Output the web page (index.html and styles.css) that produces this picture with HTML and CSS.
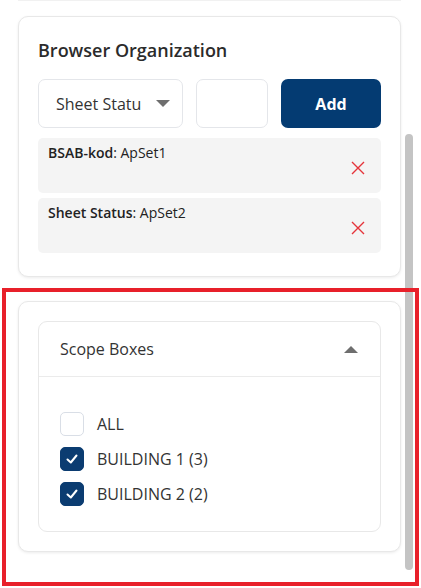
FILE: index.html
```html
<!DOCTYPE html>
<html lang="en">
<head>
    <meta charset="UTF-8">
    <meta name="viewport" content="width=device-width, initial-scale=1.0">
    <title>Browser Organization</title>
    <link rel="stylesheet" href="styles.css">
</head>
<body>

<div class="page">
    <div class="main">
        <div class="prev-card"></div>

        <!-- Browser Organization -->
        <div class="card org-card">
            <div class="title">Browser Organization</div>

            <div class="add-row">
                <div class="select">
                    <span class="select-text">Sheet Statu</span>
                    <span class="caret-down"></span>
                </div>
                <div class="value-input"></div>
                <button class="btn-add">Add</button>
            </div>

            <div class="rule">
                <div class="rule-text"><strong>BSAB-kod</strong>: ApSet1</div>
                <svg class="remove" width="14" height="14" viewBox="0 0 14 14">
                    <path d="M1 1 L13 13 M13 1 L1 13" stroke="#e5343a" stroke-width="1.4" fill="none"/>
                </svg>
            </div>
            <div class="rule">
                <div class="rule-text"><strong>Sheet Status</strong>: ApSet2</div>
                <svg class="remove" width="14" height="14" viewBox="0 0 14 14">
                    <path d="M1 1 L13 13 M13 1 L1 13" stroke="#e5343a" stroke-width="1.4" fill="none"/>
                </svg>
            </div>
        </div>

        <!-- Scope Boxes -->
        <div class="card scope-card">
            <div class="accordion">
                <div class="acc-header">
                    <span>Scope Boxes</span>
                    <span class="caret-up"></span>
                </div>
                <div class="acc-body">
                    <div class="check-row">
                        <span class="checkbox"></span>
                        <span>ALL</span>
                    </div>
                    <div class="check-row">
                        <span class="checkbox checked">
                            <svg width="14" height="14" viewBox="0 0 14 14"><path d="M2.5 7.5 L5.8 10.5 L11.5 3.5" stroke="#fff" stroke-width="2" fill="none" stroke-linecap="round" stroke-linejoin="round"/></svg>
                        </span>
                        <span>BUILDING 1 (3)</span>
                    </div>
                    <div class="check-row">
                        <span class="checkbox checked">
                            <svg width="14" height="14" viewBox="0 0 14 14"><path d="M2.5 7.5 L5.8 10.5 L11.5 3.5" stroke="#fff" stroke-width="2" fill="none" stroke-linecap="round" stroke-linejoin="round"/></svg>
                        </span>
                        <span>BUILDING 2 (2)</span>
                    </div>
                </div>
            </div>
        </div>
    </div>

    <div class="scroll-track">
        <div class="scroll-thumb"></div>
    </div>
</div>

<!-- highlight frame -->
<div class="highlight"></div>

</body>
</html>
```

FILE: styles.css
```css
body {
    margin: 0;
    padding: 0;
    background: #fff;
    color: #333;
    font-family: "Open Sans", Arial, sans-serif;
}
.page {
    display: flex;
    width: 421px;
}
.main {
    width: 383px;
    padding-left: 18px;
}
.prev-card {
    height: 1px;
    background: #f1f1f1;
}
.card {
    background: #fff;
    border: 1px solid #e8e8e8;
    border-radius: 10px;
    box-shadow: 0 1px 3px rgba(0, 0, 0, 0.08);
}
.org-card {
    margin-top: 15px;
    padding: 21px 19px 23px;
}
.title {
    font-size: 18px;
    font-weight: 600;
    line-height: 24px;
    color: #2b2b2b;
    margin-bottom: 17px;
}
.add-row {
    display: flex;
    gap: 13px;
    height: 49px;
    margin-bottom: 10px;
}
.select {
    width: 145px;
    box-sizing: border-box;
    border: 1px solid #e4e6ea;
    border-radius: 7px;
    display: flex;
    align-items: center;
    padding-left: 17px;
}
.select-text {
    width: 88px;
    white-space: nowrap;
    font-size: 16px;
    color: #333;
}
.caret-down {
    margin-left: 12px;
    width: 0;
    height: 0;
    border-left: 7px solid transparent;
    border-right: 7px solid transparent;
    border-top: 7px solid #6e6e6e;
}
.value-input {
    width: 72px;
    box-sizing: border-box;
    border: 1px solid #e4e6ea;
    border-radius: 7px;
}
.btn-add {
    width: 100px;
    border: none;
    border-radius: 7px;
    background: #043b72;
    color: #fff;
    font-family: "Open Sans", Arial, sans-serif;
    font-size: 16px;
    font-weight: 700;
    cursor: pointer;
}
.rule {
    display: flex;
    justify-content: space-between;
    height: 55px;
    box-sizing: border-box;
    padding: 5px 16px 0 10px;
    background: #f4f4f4;
    border-radius: 5px;
    margin-bottom: 5px;
}
.rule:last-child {
    margin-bottom: 0;
}
.rule-text {
    font-size: 14px;
    line-height: 20px;
    color: #222;
}
.rule-text strong {
    font-weight: 600;
}
.remove {
    margin-top: 18px;
}
.scope-card {
    margin-top: 24px;
    padding: 19px;
}
.accordion {
    border: 1px solid #e8e8e8;
    border-radius: 9px;
}
.acc-header {
    height: 54px;
    display: flex;
    align-items: center;
    justify-content: space-between;
    padding: 0 22px 0 21px;
    border-bottom: 1px solid #ebebeb;
    font-size: 16px;
    color: #333;
}
.caret-up {
    width: 0;
    height: 0;
    border-left: 7px solid transparent;
    border-right: 7px solid transparent;
    border-bottom: 7px solid #6e6e6e;
}
.acc-body {
    padding: 29px 21px 20px;
}
.check-row {
    display: flex;
    align-items: center;
    gap: 13px;
    height: 35px;
    font-size: 16px;
    color: #333;
}
.checkbox {
    width: 24px;
    height: 24px;
    box-sizing: border-box;
    border: 1.5px solid #d9dee6;
    border-radius: 5px;
    display: flex;
    align-items: center;
    justify-content: center;
}
.checkbox.checked {
    background: #0b3c71;
    border-color: #0b3c71;
}
.scroll-track {
    width: 8px;
    margin-left: 4px;
    padding-top: 134px;
}
.scroll-thumb {
    height: 436px;
    background: #c4c4c4;
    border-radius: 4px;
}
.highlight {
    position: absolute;
    left: 2px;
    top: 288px;
    width: 417px;
    height: 298px;
    box-sizing: border-box;
    border: 4px solid #e8202a;
}
```
